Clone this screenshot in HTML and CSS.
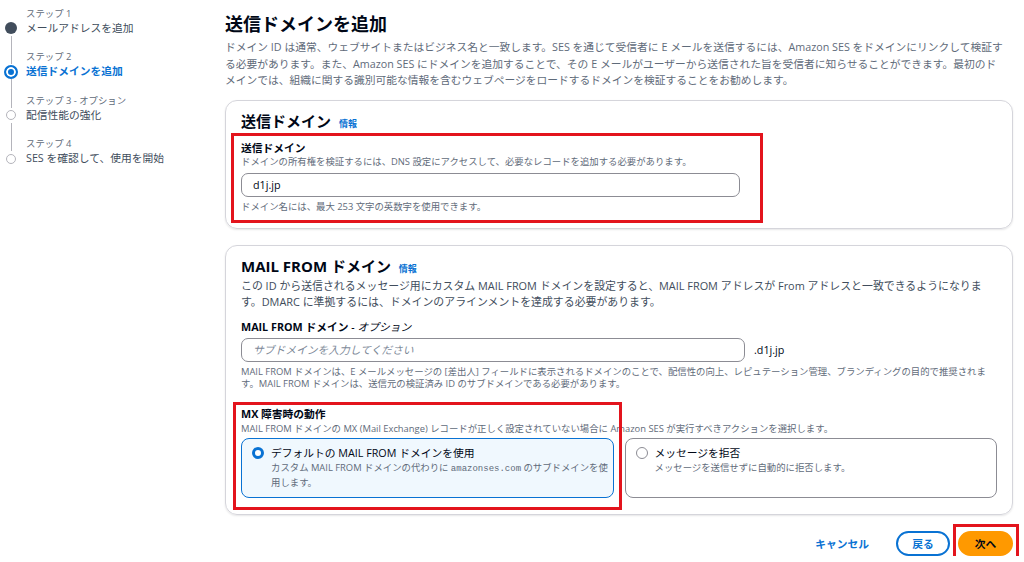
FILE: index.html
```html
<!DOCTYPE html>
<html lang="ja">
	<head>
		<meta charset="UTF-8" />
		<meta name="viewport" content="width=device-width, initial-scale=1.0" />
		<title>送信ドメインを追加</title>
		<link rel="stylesheet" href="styles.css">
	</head>
	<body>
		<div class="layout">
			<nav class="steps">
				<div class="step done">
					<span class="rail rail-top"></span>
					<span class="dot"></span>
					<span class="rail rail-bottom"></span>
					<div class="step-label">ステップ 1</div>
					<div class="step-title">メールアドレスを追加</div>
				</div>
				<div class="step current">
					<span class="rail rail-top"></span>
					<span class="dot"></span>
					<span class="rail rail-bottom"></span>
					<div class="step-label">ステップ 2</div>
					<div class="step-title">送信ドメインを追加</div>
				</div>
				<div class="step">
					<span class="rail rail-top"></span>
					<span class="dot"></span>
					<span class="rail rail-bottom"></span>
					<div class="step-label">ステップ 3 - オプション</div>
					<div class="step-title">配信性能の強化</div>
				</div>
				<div class="step">
					<span class="rail rail-top"></span>
					<span class="dot"></span>
					<span class="rail rail-bottom"></span>
					<div class="step-label">ステップ 4</div>
					<div class="step-title">SES を確認して、使用を開始</div>
				</div>
			</nav>

			<main class="main">
				<h1 class="page-title">送信ドメインを追加</h1>
				<p class="page-desc">ドメイン ID は通常、ウェブサイトまたはビジネス名と一致します。SES を通じて受信者に E メールを送信するには、Amazon SES をドメインにリンクして検証する必要があります。また、Amazon SES にドメインを追加することで、その E メールがユーザーから送信された旨を受信者に知らせることができます。最初のドメインでは、組織に関する識別可能な情報を含むウェブページをロードするドメインを検証することをお勧めします。</p>

				<section class="card card-domain">
					<h2 class="card-title">送信ドメイン <a class="info" href="#">情報</a></h2>
					<div class="field field-domain">
						<span class="annot annot-domain"></span>
						<div class="label">送信ドメイン</div>
						<div class="small">ドメインの所有権を検証するには、DNS 設定にアクセスして、必要なレコードを追加する必要があります。</div>
						<input class="input input-domain" type="text" value="d1j.jp" />
						<div class="small help">ドメイン名には、最大 253 文字の英数字を使用できます。</div>
					</div>
				</section>

				<section class="card card-mail">
					<h2 class="card-title">MAIL FROM ドメイン <a class="info" href="#">情報</a></h2>
					<p class="card-desc">この ID から送信されるメッセージ用にカスタム MAIL FROM ドメインを設定すると、MAIL FROM アドレスが From アドレスと一致できるようになります。DMARC に準拠するには、ドメインのアラインメントを達成する必要があります。</p>
					<div class="field field-mail">
						<div class="label">MAIL FROM ドメイン <span class="optional">- オプション</span></div>
						<div class="input-row">
							<input class="input input-mail" type="text" placeholder="サブドメインを入力してください" />
							<span class="suffix">.d1j.jp</span>
						</div>
						<div class="small help">MAIL FROM ドメインは、E メールメッセージの [差出人] フィールドに表示されるドメインのことで、配信性の向上、レピュテーション管理、ブランディングの目的で推奨されます。MAIL FROM ドメインは、送信元の検証済み ID のサブドメインである必要があります。</div>
					</div>
					<div class="field field-mx">
						<span class="annot annot-mx"></span>
						<div class="label">MX 障害時の動作</div>
						<div class="small mx-desc">MAIL FROM ドメインの MX (Mail Exchange) レコードが正しく設定されていない場合に Amazon SES が実行すべきアクションを選択します。</div>
						<div class="tiles">
							<div class="tile selected">
								<span class="radio"></span>
								<div class="tile-title">デフォルトの MAIL FROM ドメインを使用</div>
								<div class="tile-desc">カスタム MAIL FROM ドメインの代わりに <code>amazonses.com</code> のサブドメインを使用します。</div>
							</div>
							<div class="tile">
								<span class="radio"></span>
								<div class="tile-title">メッセージを拒否</div>
								<div class="tile-desc">メッセージを送信せずに自動的に拒否します。</div>
							</div>
						</div>
					</div>
				</section>

				<div class="actions">
					<button class="btn btn-link">キャンセル</button>
					<button class="btn btn-normal">戻る</button>
					<div class="next-wrap">
						<span class="annot annot-next"></span>
						<button class="btn btn-primary">次へ</button>
					</div>
				</div>
			</main>
		</div>
	</body>
</html>
```

FILE: styles.css
```css
body {
	margin: 0;
	font-family: "Open Sans", "Noto Sans CJK JP", sans-serif;
	color: #000716;
	background-color: #fff;
}
.layout {
	display: grid;
	grid-template-columns: 225px 1fr;
}

/* wizard steps */
.steps {
	padding-top: 5.5px;
}
.step {
	display: grid;
	grid-template-columns: 22px 1fr;
	grid-template-rows: 15px 15px 13.5px;
	column-gap: 4px;
}
.rail {
	grid-column: 1;
	justify-self: center;
	width: 1px;
	background-color: #b4b4bb;
}
.rail-top {
	grid-row: 1;
}
.rail-bottom {
	grid-row: 3;
}
.step:first-child .rail-top,
.step:last-child .rail-bottom {
	visibility: hidden;
}
.dot {
	grid-column: 1;
	grid-row: 2;
	justify-self: center;
	align-self: center;
	box-sizing: border-box;
	width: 10px;
	height: 10px;
	border: 1.5px solid #b4b4bb;
	border-radius: 50%;
	background-color: #fff;
}
.done .dot {
	width: 12px;
	height: 12px;
	border: none;
	background-color: #414d5c;
}
.current .dot {
	width: 14px;
	height: 14px;
	border: 2px solid #0972d3;
	background-color: #0972d3;
	box-shadow: inset 0 0 0 2px #fff;
}
.step-label {
	grid-column: 2;
	grid-row: 1;
	font-size: 9.4px;
	line-height: 15px;
	color: #5f6b7a;
}
.step-title {
	grid-column: 2;
	grid-row: 2;
	font-size: 10.75px;
	line-height: 15px;
	color: #414d5c;
	white-space: nowrap;
}
.current .step-title {
	color: #0972d3;
	font-weight: 700;
}

/* main column */
.main {
	padding: 13px 11px 0 0;
}
.page-title {
	margin: 0;
	font-size: 18px;
	line-height: 22px;
	font-weight: 700;
}
.page-desc {
	margin: 4px 0 0;
	padding-right: 8px;
	font-size: 10.75px;
	line-height: 16.5px;
	color: #5f6b7a;
}
.card {
	margin-top: 11px;
	padding: 11px 15px 16px;
	border: 1px solid #d5d5db;
	border-radius: 12px;
	box-shadow: 0 1px 2px rgba(0, 7, 22, 0.1);
}
.card-domain {
	padding-bottom: 15px;
}
.card-mail {
	margin-top: 16px;
}
.card-title {
	margin: 0;
	font-size: 15px;
	line-height: 18px;
	font-weight: 700;
}
.info {
	margin-left: 4px;
	font-size: 9px;
	font-weight: 700;
	color: #0972d3;
	text-decoration: none;
}
.card-desc {
	margin: 0;
	padding-right: 10px;
	font-size: 10.9px;
	line-height: 16px;
	color: #414d5c;
}

/* fields */
.field {
	position: relative;
}
.field-domain {
	margin-top: 8.5px;
}
.field-mail {
	margin-top: 9.5px;
}
.field-mx {
	margin-top: 17px;
}
.label {
	font-size: 10.75px;
	line-height: 15px;
	font-weight: 700;
}
.optional {
	font-weight: 400;
	font-style: italic;
}
.small {
	font-size: 9.4px;
	line-height: 12px;
	color: #5f6b7a;
}
.help {
	margin-top: 4px;
}
.mx-desc {
	margin-top: 1.5px;
	white-space: nowrap;
}
.input {
	display: block;
	box-sizing: border-box;
	height: 24px;
	margin: 0;
	padding: 0 11px;
	border: 1px solid #8c8c94;
	border-radius: 7px;
	font-family: inherit;
	font-size: 10.75px;
	color: #000716;
	background-color: #fff;
}
.input::placeholder {
	color: #7d8998;
	font-style: italic;
}
.input-domain {
	width: 499px;
	margin-top: 5px;
}
.input-row {
	display: flex;
	align-items: center;
	margin-top: 3px;
}
.input-mail {
	width: 504px;
}
.suffix {
	margin-left: 9px;
	font-size: 10.75px;
}

/* tiles */
.tiles {
	display: grid;
	grid-template-columns: 1fr 1fr;
	column-gap: 11px;
	margin-top: 3px;
}
.tile {
	display: grid;
	grid-template-columns: 12px 1fr;
	column-gap: 7px;
	align-content: start;
	box-sizing: border-box;
	height: 60px;
	padding: 6.5px 2px 0 10px;
	border: 1.5px solid #8c8c94;
	border-radius: 8px;
}
.tile.selected {
	border-color: #0972d3;
	background-color: #f0f8fe;
}
.radio {
	grid-row: 1;
	align-self: center;
	box-sizing: border-box;
	width: 12px;
	height: 12px;
	border: 1.5px solid #8c8c94;
	border-radius: 50%;
	background-color: #fff;
}
.selected .radio {
	border: 3.5px solid #0972d3;
}
.tile-title {
	font-size: 10.75px;
	line-height: 15px;
}
.tile-desc {
	grid-column: 2;
	font-size: 9.4px;
	line-height: 14px;
	color: #5f6b7a;
}
code {
	font-family: "Liberation Mono", monospace;
	font-size: 9px;
	line-height: 14px;
}

/* footer */
.actions {
	display: flex;
	justify-content: flex-end;
	align-items: center;
	gap: 8px;
	margin-top: 16px;
}
.btn {
	box-sizing: border-box;
	height: 25px;
	padding: 0 14px;
	border: 2px solid transparent;
	border-radius: 20px;
	font-family: inherit;
	font-size: 10.75px;
	font-weight: 700;
	background: none;
	cursor: pointer;
}
.btn-link {
	color: #0972d3;
	margin-right: 3px;
}
.btn-normal {
	width: 54px;
	padding: 0;
	border-color: #0972d3;
	color: #0972d3;
	background-color: #fff;
}
.btn-primary {
	display: block;
	width: 55px;
	padding: 0;
	border-color: #ff9900;
	background-color: #ff9900;
	color: #000716;
}
.next-wrap {
	position: relative;
}

/* red annotation frames */
.annot {
	position: absolute;
	box-sizing: border-box;
	border: 3px solid #e3141d;
	pointer-events: none;
}
.annot-domain {
	left: -10px;
	top: -8.5px;
	width: 532px;
	height: 90px;
}
.annot-mx {
	left: -8px;
	top: -5px;
	width: 389px;
	height: 108px;
}
.annot-next {
	left: -5px;
	top: -7px;
	width: 66px;
	height: 38px;
}
```
